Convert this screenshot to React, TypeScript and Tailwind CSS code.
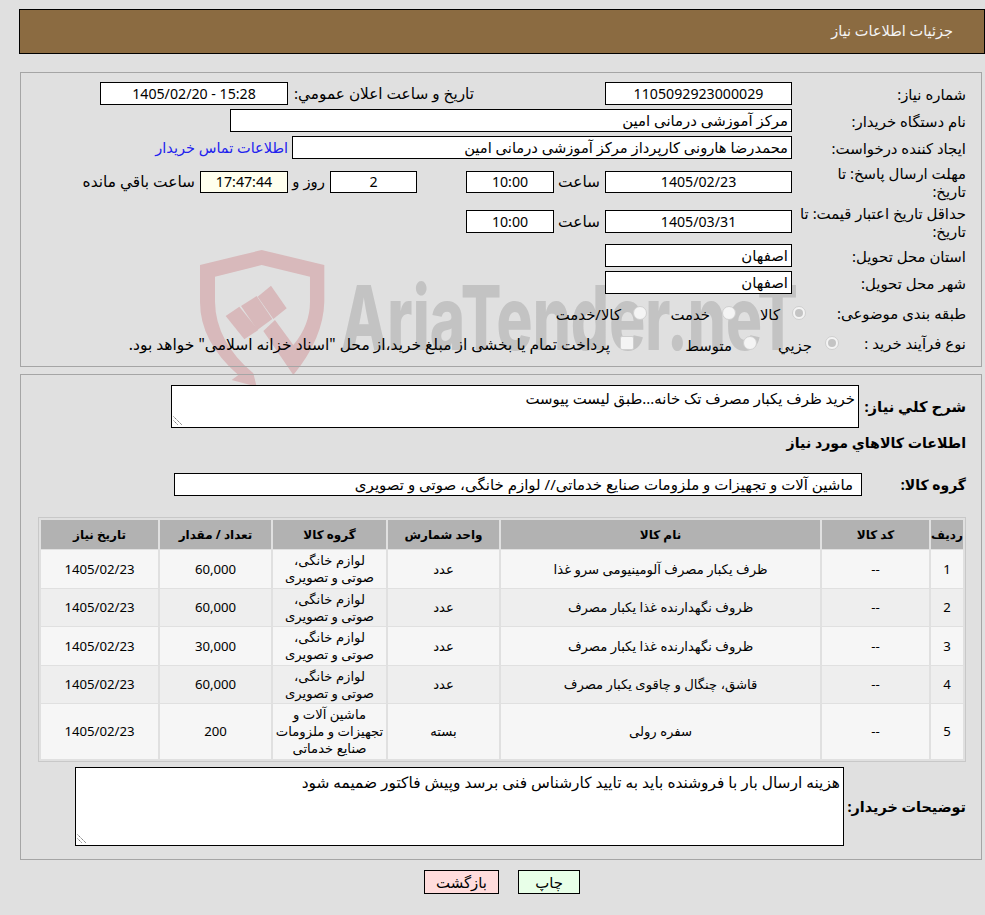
const font = { fontFamily: '"Noto Sans", "DejaVu Sans", sans-serif' };

function Box({ w, h = 'h-[23px]', center, children, extra = '' }: { w: string; h?: string; center?: boolean; children?: React.ReactNode; extra?: string }) {
  return (
    <div className={`${w} ${h} shrink-0 border border-black px-[3px] flex items-center ${center ? 'justify-center text-[14.2px]' : 'justify-start'} ${extra || 'bg-white'}`}>
      <span className="whitespace-nowrap">{children}</span>
    </div>
  );
}

function Label({ children, w = 'w-[174px]' }: { children: React.ReactNode; w?: string }) {
  return <div className={`${w} shrink-0 pl-[4px] leading-[18px]`}>{children}</div>;
}

function Radio({ on }: { on?: boolean }) {
  return (
    <span className="inline-flex h-[14px] w-[14px] shrink-0 items-center justify-center rounded-full border border-[#cfcfcf] bg-[#f4f4f4]">
      {on && <span className="h-[8px] w-[8px] rounded-full bg-[#c4c4c4]" />}
    </span>
  );
}

function Grip() {
  return (
    <svg className="absolute bottom-[1px] left-[1px]" width="10" height="10" viewBox="0 0 10 10" stroke="#777" strokeWidth="1" strokeDasharray="1.5 0.7" fill="none">
      <path d="M0.5 0.5 L9 9" />
      <path d="M0.5 4.5 L5 9" />
    </svg>
  );
}

const home = 'لوازم خانگی،\nصوتی و تصویری';
const rows = [
  ['1', '--', 'ظرف یکبار مصرف آلومینیومی سرو غذا', 'عدد', home, '60,000', '1405/02/23', 'h-[38px]', 'bg-[#f6f6f6]'],
  ['2', '--', 'ظروف نگهدارنده غذا یکبار مصرف', 'عدد', home, '60,000', '1405/02/23', 'h-[37px]', 'bg-[#eeeeee]'],
  ['3', '--', 'ظروف نگهدارنده غذا یکبار مصرف', 'عدد', home, '30,000', '1405/02/23', 'h-[38px]', 'bg-[#f6f6f6]'],
  ['4', '--', 'قاشق، چنگال و چاقوی یکبار مصرف', 'عدد', home, '60,000', '1405/02/23', 'h-[37px]', 'bg-[#eeeeee]'],
  ['5', '--', 'سفره رولی', 'بسته', 'ماشین آلات و\nتجهیزات و ملزومات\nصنایع خدماتی', '200', '1405/02/23', 'h-[55px]', 'bg-[#f6f6f6]'],
];

const heads = ['ردیف', 'کد کالا', 'نام کالا', 'واحد شمارش', 'گروه کالا', 'تعداد / مقدار', 'تاریخ نیاز'];
const widths = ['w-[32px]', 'w-[107px]', 'w-[319px]', 'w-[111px]', 'w-[113px]', 'w-[111px]', 'w-[117px]'];

function Watermark() {
  return (
    <svg className="absolute left-0 top-0 z-0" width="985" height="420" viewBox="0 0 985 420">
      <g transform="translate(195 245) scale(0.3333)" fill="#d8b9bb">
        <path d="M15 60 L200 15 L388 60 L388 170 Q385 280 295 390 L205 258 L240 225 L295 300 Q345 240 345 170 L345 95 L200 60 L60 95 L60 170 Q62 290 175 385 L185 425 L110 405 L130 390 Q15 290 15 170 Z" />
        <path d="M92 213 L133 185 L190 255 L148 283 Z" />
        <path d="M138 183 L185 153 L232 222 L187 255 Z" />
        <path d="M188 155 L228 122 L275 190 L235 222 Z" />
      </g>
      <text className="[direction:ltr]" x="341" y="350" fill="#c3c3c3" fontFamily="Inter, sans-serif" fontWeight="800" fontSize="89" textLength="457" lengthAdjust="spacingAndGlyphs">
        AriaTender.neT
      </text>
    </svg>
  );
}

export default function App() {
  return (
    <div dir="rtl" style={font} className="relative h-[915px] w-[985px] overflow-hidden bg-[#e0e0e0] text-[14.9px] text-black">
      <Watermark />
      <div className="relative z-10 flex flex-col">
        <header className="mt-[9px] flex h-[45px] w-[966px] items-center border border-black bg-[#8b6b41] pb-[1px] pr-[31px] text-[14.5px] text-[#f4f4f4]">
          جزئیات اطلاعات نیاز
        </header>

        <section className="mx-[3px] mt-[18px] h-[295px] w-[962px] border border-[#a5a5a5] pr-[15px] pt-[9px]">
          <div className="flex h-[23px] items-center">
            <Label>شماره نیاز:</Label>
            <Box w="w-[187px]" center>1105092923000029</Box>
            <div className="mr-[131px] w-[181px] shrink-0 whitespace-nowrap text-[15.3px]">تاریخ و ساعت اعلان عمومي:</div>
            <Box w="w-[188px]" extra="mr-[5px] bg-white" center><span dir="ltr">1405/02/20 - 15:28</span></Box>
          </div>
          <div className="mt-[4px] flex h-[23px] items-center">
            <Label>نام دستگاه خریدار:</Label>
            <Box w="w-[562px]">مرکز آموزشی درمانی امین</Box>
          </div>
          <div className="mt-[4px] flex h-[23px] items-center">
            <Label>ایجاد کننده درخواست:</Label>
            <Box w="w-[500px]" extra="bg-white text-[14.7px]">محمدرضا هارونی کارپرداز مرکز آموزشی درمانی امین</Box>
            <a className="mr-[4px] whitespace-nowrap text-[14.5px] text-[#2222ee]">اطلاعات تماس خریدار</a>
          </div>
          <div className="mt-[5px] flex h-[40px] items-start">
            <Label>مهلت ارسال پاسخ: تا<br />تاریخ:</Label>
            <div className="mt-[6px] flex items-center">
              <Box w="w-[187px]" h="h-[22px]" center>1405/02/23</Box>
              <span className="mr-[5px] w-[46px] text-[15.4px]">ساعت</span>
              <Box w="w-[88px]" h="h-[22px]" center>10:00</Box>
              <Box w="w-[87px]" h="h-[22px]" extra="mr-[49px] bg-white" center>2</Box>
              <span className="mr-[5px] w-[37px] whitespace-nowrap">روز و</span>
              <Box w="w-[88px]" h="h-[22px]" extra="bg-[#ffffee]" center>17:47:44</Box>
              <span className="mr-[5px] whitespace-nowrap text-[15.4px]">ساعت باقي مانده</span>
            </div>
          </div>
          <div className="flex h-[40px] items-start">
            <Label>حداقل تاریخ اعتبار قیمت: تا<br />تاریخ:</Label>
            <div className="mt-[6px] flex items-center">
              <Box w="w-[187px]" center>1405/03/31</Box>
              <span className="mr-[5px] w-[46px] text-[15.4px]">ساعت</span>
              <Box w="w-[88px]" center>10:00</Box>
            </div>
          </div>
          <div className="flex h-[23px] items-center">
            <Label>استان محل تحویل:</Label>
            <Box w="w-[187px]">اصفهان</Box>
          </div>
          <div className="mt-[4px] flex h-[23px] items-center">
            <Label>شهر محل تحویل:</Label>
            <Box w="w-[187px]">اصفهان</Box>
          </div>
          <div className="mt-[7px] flex h-[24px] items-center">
            <Label w="w-[160px]">طبقه بندی موضوعی:</Label>
            <Radio on />
            <span className="mr-[12px] mt-[3px] w-[44px]">کالا</span>
            <Radio />
            <span className="mr-[12px] mt-[3px] w-[63px]">خدمت</span>
            <Radio />
            <span className="mr-[12px] mt-[3px]">کالا/خدمت</span>
          </div>
          <div className="mt-[6px] flex h-[24px] items-center">
            <Label w="w-[127px]">نوع فرآیند خرید :</Label>
            <Radio on />
            <span className="mr-[13px] mt-[4px] w-[55px]">جزیي</span>
            <Radio />
            <span className="mr-[11px] mt-[4px] w-[98px]">متوسط</span>
            <span className="h-[14px] w-[14px] shrink-0 rounded-[2px] border border-[#cfcfcf] bg-[#f4f4f4]" />
            <span className="mr-[10px] mt-[4px] whitespace-nowrap text-[15.5px]">پرداخت تمام یا بخشی از مبلغ خرید،از محل "اسناد خزانه اسلامی" خواهد بود.</span>
          </div>
        </section>

        <section className="mx-[3px] mt-[7px] h-[486px] w-[962px] border border-[#a5a5a5] pr-[15px] pt-[10px]">
          <div className="flex h-[43px] items-center">
            <div className="w-[107px] shrink-0 text-[14.8px] font-bold">شرح كلي نیاز:</div>
            <div className="relative h-[43px] w-[688px] shrink-0 border border-black bg-white px-[3px] pt-[1px]">
              خرید ظرف یکبار مصرف تک خانه...طبق لیست پیوست
              <Grip />
            </div>
          </div>
          <div className="mt-[5px] h-[20px] text-[14.2px] font-bold leading-[20px]">اطلاعات كالاهاي مورد نیاز</div>
          <div className="mt-[20px] flex h-[23px] items-center">
            <div className="w-[104px] shrink-0 text-[14px] font-bold">گروه کالا:</div>
            <div className="flex h-[23px] w-[688px] shrink-0 items-center border border-black bg-white pr-[8px] text-[15px]">
              ماشین آلات و تجهیزات و ملزومات صنایع خدماتی// لوازم خانگی، صوتی و تصویری
            </div>
          </div>
          <div className="mt-[21px] w-[928px] border border-[#c8c8c8] p-[2px] text-[13.2px]">
            <div className="flex gap-[2px]">
              {heads.map((h, i) => (
                <div key={h} className={`${widths[i]} flex h-[29px] shrink-0 items-center justify-center whitespace-nowrap bg-[#b2b2b2] text-[12px] font-bold`}>
                  {h}
                </div>
              ))}
            </div>
            {rows.map((r) => (
              <div key={r[0]} className="mt-[1px] flex gap-[2px]">
                {r.slice(0, 7).map((c, i) => (
                  <div key={i} className={`${widths[i]} ${r[7]} ${r[8]} flex shrink-0 items-center justify-center whitespace-pre-line text-center leading-[17px]`}>
                    {c}
                  </div>
                ))}
              </div>
            ))}
          </div>
          <div className="mt-[5px] flex h-[79px] items-center">
            <div className="w-[122px] shrink-0 whitespace-nowrap text-[14.4px] font-bold">توضیحات خریدار:</div>
            <div className="relative h-[79px] w-[769px] shrink-0 border border-black bg-white px-[3px] pt-[3px] text-[15.4px]">
              هزینه ارسال بار با فروشنده باید به تایید کارشناس فنی برسد وپیش فاکتور ضمیمه شود
              <Grip />
            </div>
          </div>
        </section>

        <div className="mt-[10px] flex justify-center gap-[19px] pl-[19px]">
          <button className="flex h-[24px] w-[62px] items-center justify-center border border-black bg-[#e8ffe8]">چاپ</button>
          <button className="flex h-[24px] w-[75px] items-center justify-center border border-black bg-[#ffdcdc]">بازگشت</button>
        </div>
      </div>
    </div>
  );
}
